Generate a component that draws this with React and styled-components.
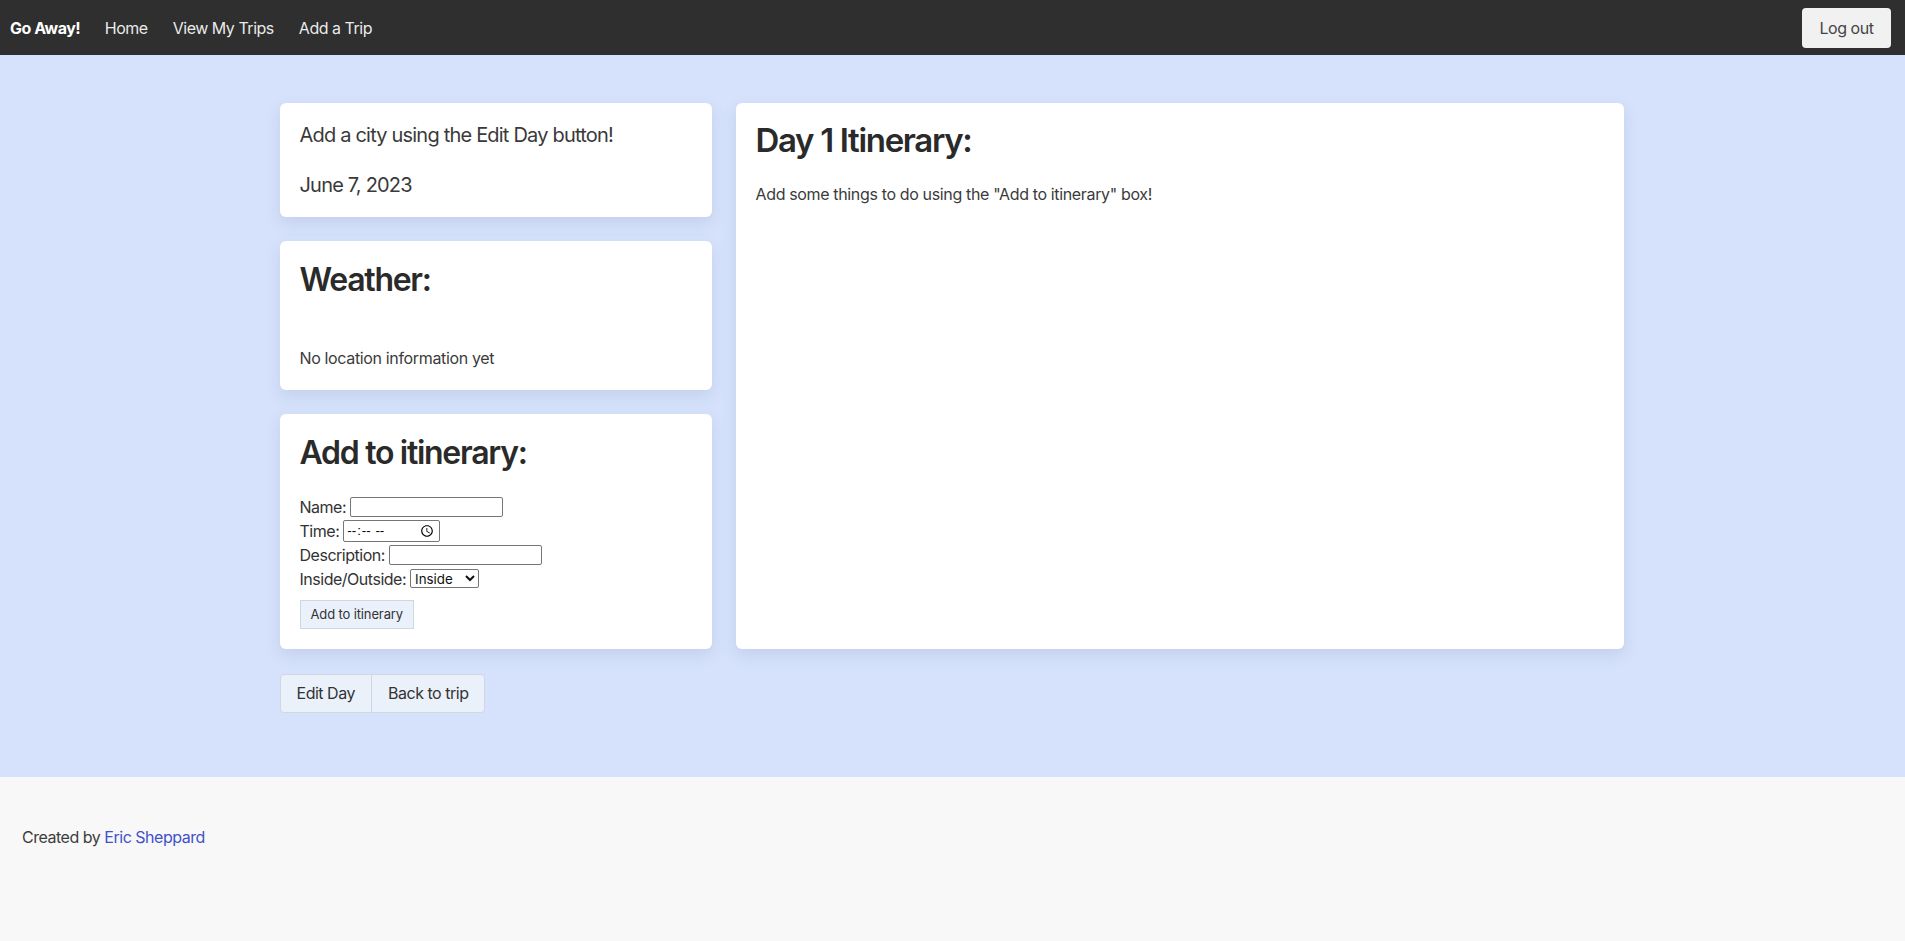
import React from "react";
import styled, { createGlobalStyle } from "styled-components";

const GlobalStyle = createGlobalStyle`
  html, body {
    margin: 0;
    padding: 0;
    background: #f8f8f8;
    font-family: Inter, "Noto Sans", "Liberation Sans", sans-serif;
    letter-spacing: -0.03em;
    color: #333;
  }
  * { box-sizing: border-box; }
`;

const NavBar = styled.nav`
  height: 55px;
  background: #2f2f2f;
  display: flex;
  align-items: center;
  padding: 0 14px 0 10px;
`;

const Brand = styled.a`
  color: #fff;
  font-weight: 700;
  font-size: 16px;
  margin-right: 12px;
  text-decoration: none;
`;

const NavLink = styled.a`
  color: rgba(255, 255, 255, 0.92);
  font-size: 16px;
  padding: 0 12.5px;
  text-decoration: none;
`;

const Spacer = styled.div`
  flex: 1;
`;

const LogoutButton = styled.button`
  height: 40px;
  width: 89px;
  border: none;
  border-radius: 4px;
  background: #f1f1f1;
  color: #444;
  font-family: inherit;
  letter-spacing: inherit;
  font-size: 16px;
`;

const Main = styled.main`
  background: #d6e2fb;
  padding: 48px 0 64px;
`;

const Container = styled.div`
  width: 1344px;
  margin: 0 auto;
  transform: translateX(-1px);
`;

const Grid = styled.div`
  display: grid;
  grid-template-columns: 432px 888px;
  gap: 24px;
`;

const Column = styled.div`
  display: flex;
  flex-direction: column;
  gap: 24px;
`;

const Card = styled.section`
  background: #fff;
  border-radius: 6px;
  box-shadow: 0 6px 16px rgba(70, 90, 150, 0.13);
  padding: ${(p) => p.$pad || "20px"};
`;

const Lead = styled.p`
  margin: ${(p) => (p.$first ? "0" : "26px 0 0")};
  font-size: 20px;
  line-height: 24px;
  letter-spacing: -0.04em;
  color: #3a3a3a;
`;

const Heading = styled.h2`
  margin: 0 0 ${(p) => p.$mb || "0"};
  font-size: ${(p) => p.$size || "32px"};
  font-weight: 600;
  line-height: 1.2;
  letter-spacing: -0.04em;
  color: #2a2a2a;
`;

const Text = styled.p`
  margin: 0;
  font-size: 16px;
  line-height: 24px;
  letter-spacing: -0.022em;
  color: #3b3b3b;
`;

const FormRow = styled.div`
  height: 24px;
  display: flex;
  align-items: center;
  gap: 4px;
  font-size: 16px;
  color: #333;
`;

const TextInput = styled.input`
  width: ${(p) => p.$w};
  height: 20px;
  border: 1px solid #767676;
  border-radius: 2px;
  padding: 1px 2px;
  font-family: "Liberation Sans", sans-serif;
  font-size: 13.33px;
  background: #fff;
`;

const TimeInput = styled.input`
  width: 97px;
  height: 22px;
  border: 1px solid #767676;
  border-radius: 2px;
  padding: 1px 2px;
  font-family: "Liberation Sans", sans-serif;
  font-size: 13.33px;
  letter-spacing: 0;
  background: #fff;
`;

const Select = styled.select`
  width: 69px;
  height: 19px;
  font-family: Inter, sans-serif;
  font-size: 13.33px;
  letter-spacing: 0;
  border: 1px solid #767676;
  border-radius: 2px;
  background: #fff;
  color: #111;
`;

const SmallButton = styled.button`
  margin-top: 9px;
  height: 29px;
  padding: 0 10px;
  background: #ebf1fb;
  border: 1px solid #cfd7e3;
  border-radius: 0;
  font-family: inherit;
  letter-spacing: -0.01em;
  font-size: 13px;
  color: #333;
`;

const ButtonGroup = styled.div`
  display: flex;
  margin-top: 25px;
`;

const GroupButton = styled.button`
  height: 39px;
  padding: 0 16px;
  background: #ebf1fb;
  border: 1px solid #cfd7e3;
  font-family: inherit;
  letter-spacing: inherit;
  font-size: 16px;
  color: #333;
  border-radius: ${(p) => (p.$first ? "4px 0 0 4px" : "0 4px 4px 0")};
  margin-left: ${(p) => (p.$first ? "0" : "-1px")};
`;

const Footer = styled.footer`
  background: #f8f8f8;
  padding: 48px 22px;
  font-size: 16px;
  line-height: 24px;
  color: #3d3d3d;
`;

const FooterLink = styled.a`
  color: #4052c9;
  text-decoration: none;
`;

export default function App() {
  return (
    <>
      <GlobalStyle />
      <NavBar>
        <Brand href="#">Go Away!</Brand>
        <NavLink href="#">Home</NavLink>
        <NavLink href="#">View My Trips</NavLink>
        <NavLink href="#">Add a Trip</NavLink>
        <Spacer />
        <LogoutButton>Log out</LogoutButton>
      </NavBar>
      <Main>
        <Container>
          <Grid>
            <Column>
              <Card>
                <Lead $first>Add a city using the Edit Day button!</Lead>
                <Lead>June 7, 2023</Lead>
              </Card>
              <Card>
                <Heading $mb="47px">Weather:</Heading>
                <Text>No location information yet</Text>
              </Card>
              <Card>
                <Heading $mb="22px">Add to itinerary:</Heading>
                <FormRow>
                  Name: <TextInput type="text" $w="153px" />
                </FormRow>
                <FormRow>
                  Time: <TimeInput type="time" />
                </FormRow>
                <FormRow>
                  Description: <TextInput type="text" $w="153px" />
                </FormRow>
                <FormRow>
                  Inside/Outside:{" "}
                  <Select defaultValue="Inside">
                    <option>Inside</option>
                    <option>Outside</option>
                  </Select>
                </FormRow>
                <SmallButton>Add to itinerary</SmallButton>
              </Card>
            </Column>
            <Card $pad="18px 20px 20px">
              <Heading $size="33px" $mb="21px">
                Day 1 Itinerary:
              </Heading>
              <Text>Add some things to do using the "Add to itinerary" box!</Text>
            </Card>
          </Grid>
          <ButtonGroup>
            <GroupButton $first>Edit Day</GroupButton>
            <GroupButton>Back to trip</GroupButton>
          </ButtonGroup>
        </Container>
      </Main>
      <Footer>
        Created by <FooterLink href="#">Eric Sheppard</FooterLink>
      </Footer>
    </>
  );
}
